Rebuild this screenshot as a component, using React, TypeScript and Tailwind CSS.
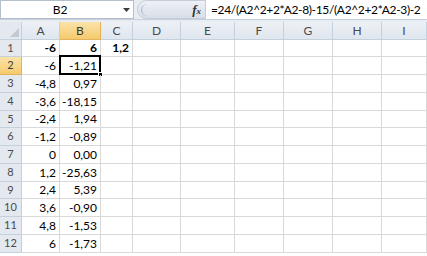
// Excel-style sheet: formula bar, column/row headers, two columns of values.
const COLS = ["A", "B", "C", "D", "E", "F", "G", "H", "I"];
const WIDTHS = ["w-[38px]", "w-[41px]", "w-[32px]", "w-[48px]", "w-[54px]", "w-[49px]", "w-[49px]", "w-[49px]", "w-[45px]"];
const HEIGHTS = ["h-[17px]", "h-[18px]", "h-[18px]", "h-[18px]", "h-[17px]", "h-[18px]", "h-[18px]", "h-[18px]", "h-[17px]", "h-[18px]", "h-[18px]", "h-[18px]"];

const ROWS: { a: string; b: string; c?: string; bold?: boolean }[] = [
  { a: "-6", b: "6", c: "1,2", bold: true },
  { a: "-6", b: "-1,21" },
  { a: "-4,8", b: "0,97" },
  { a: "-3,6", b: "-18,15" },
  { a: "-2,4", b: "1,94" },
  { a: "-1,2", b: "-0,89" },
  { a: "0", b: "0,00" },
  { a: "1,2", b: "-25,63" },
  { a: "2,4", b: "5,39" },
  { a: "3,6", b: "-0,90" },
  { a: "4,8", b: "-1,53" },
  { a: "6", b: "-1,73" },
];

function FormulaBar() {
  return (
    <div className="flex h-[20px] items-stretch border-b border-[#c6cfdb] bg-[#e8edf4]">
      <div className="flex w-[134px] items-center border border-[#b4bfcd] bg-white">
        <span className="flex-1 text-center text-[12px] text-black">B2</span>
        <span className="flex w-[14px] items-center justify-center">
          <svg width="7" height="4" viewBox="0 0 7 4">
            <path d="M0 0h7L3.5 4z" fill="#3c3c3c" />
          </svg>
        </span>
      </div>
      <div className="ml-[3px] flex w-[69px] items-center rounded-l-full border border-[#c3ccd8] bg-gradient-to-b from-[#eef1f6] to-[#d8dee8] pl-[3px] pr-[4px]">
        <span className="h-[12px] w-[6px] rounded-l-full border-l border-[#aab3c0]" />
        <span className="ml-auto font-['Liberation_Serif',serif] text-[13px] font-bold italic text-[#333]">
          f<span className="text-[9px]">x</span>
        </span>
      </div>
      <div className="flex flex-1 items-center bg-white pl-[5px] text-[12px] tracking-[-0.35px] whitespace-nowrap text-black">
        =24/(A2^2+2*A2-8)-15/(A2^2+2*A2-3)-2
      </div>
    </div>
  );
}

function ColumnHeader() {
  return (
    <div className="flex h-[18px]">
      <div className="relative w-[22px] border-r border-b border-[#c5d0dd] bg-[#e4e9f0]">
        <svg className="absolute right-[2px] bottom-[2px]" width="9" height="9" viewBox="0 0 9 9">
          <path d="M9 0v9H0z" fill="#c3cad4" />
        </svg>
      </div>
      {COLS.map((c, i) => (
        <div
          key={c}
          className={`${WIDTHS[i]} flex shrink-0 items-center justify-center border-r border-b text-[12px] ${
            c === "B"
              ? "border-[#e3b25a] bg-gradient-to-b from-[#fbe3a8] to-[#f6ca6c] text-[#3b3b3b]"
              : "border-[#c5d0dd] bg-gradient-to-b from-[#edf1f6] to-[#e0e6ee] text-[#4a4a4a]"
          }`}
        >
          {c}
        </div>
      ))}
    </div>
  );
}

export default function App() {
  return (
    <div className="h-[256px] w-[427px] overflow-hidden bg-white font-['Lato',sans-serif]">
      <FormulaBar />
      <div className="h-[2px] bg-[#e8edf4]" />
      <ColumnHeader />
      {ROWS.map((r, i) => {
        const sel = i === 1;
        const weight = r.bold ? "font-bold" : "";
        return (
          <div key={i} className={`flex ${HEIGHTS[i]}`}>
            <div
              className={`flex w-[22px] shrink-0 items-center justify-center border-r border-b text-[11px] ${
                sel
                  ? "border-[#e3b25a] bg-gradient-to-b from-[#fbe3a8] to-[#f6ca6c] text-[#3b3b3b]"
                  : "border-[#c5d0dd] bg-[#e4e9f0] text-[#4a4a4a]"
              }`}
            >
              {i + 1}
            </div>
            <div className={`flex w-[38px] shrink-0 items-center justify-end border-r border-b border-[#d9d9d9] pr-[3px] text-[12px] text-black ${weight}`}>
              {r.a}
            </div>
            <div className={`relative flex w-[41px] shrink-0 items-center justify-end border-r border-b border-[#d9d9d9] pr-[3px] text-[12px] text-black ${weight}`}>
              {sel && (
                <>
                  <span className="absolute -top-[2px] -left-[1px] -right-[1px] -bottom-[1px] border-2 border-black" />
                  <span className="absolute -right-[3px] -bottom-[3px] h-[5px] w-[5px] border border-white bg-black" />
                </>
              )}
              {r.b}
            </div>
            <div className={`flex w-[32px] shrink-0 items-center justify-end border-r border-b border-[#d9d9d9] pr-[3px] text-[12px] text-black ${weight}`}>
              {r.c ?? ""}
            </div>
            {WIDTHS.slice(3).map((w, j) => (
              <div key={j} className={`${w} shrink-0 border-r border-b border-[#d9d9d9]`} />
            ))}
          </div>
        );
      })}
    </div>
  );
}
